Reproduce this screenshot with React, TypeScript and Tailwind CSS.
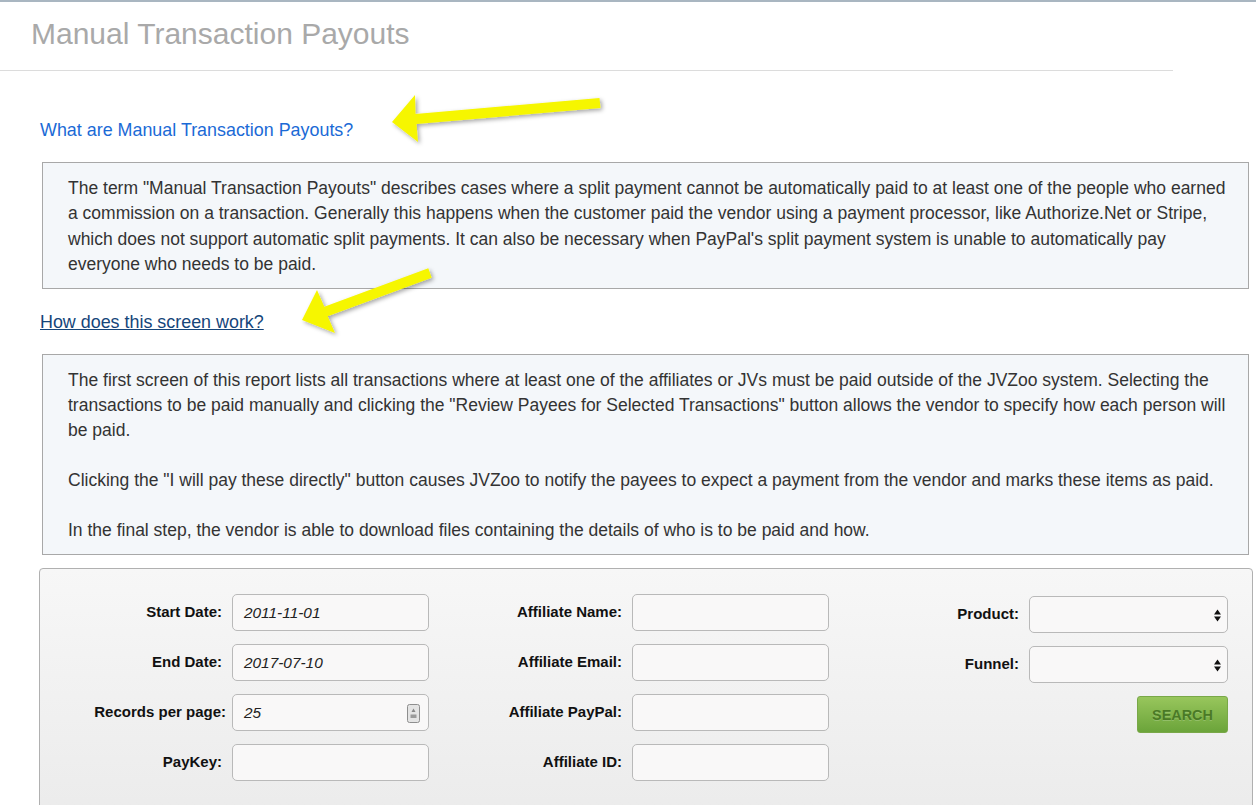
const font = { fontFamily: '"Liberation Sans", Arial, Helvetica, sans-serif' };

function Field({ label, value, spinner, wide }: { label: string; value?: string; spinner?: boolean; wide?: boolean }) {
  return (
    <div className="flex items-center h-[37px]">
      <label className={`flex-1 text-right text-[15px] font-bold text-[#111] whitespace-nowrap ${wide ? "pr-[6px]" : "pr-[10px]"}`}>{label}</label>
      <div className="relative w-[197px] h-[37px] rounded-[5px] border border-[#b9b9b9] bg-[#f9f8f8] flex items-center px-[11px]">
        <span className="text-[15.4px] italic text-[#222]">{value}</span>
        {spinner && (
          <svg className="absolute right-[8px] top-[9px]" width="13" height="19" viewBox="0 0 13 19">
            <rect x="0.5" y="0.5" width="12" height="18" rx="2" fill="#e4e4e4" stroke="#8e8e8e" />
            <path d="M6.5 4.5 L8.5 8 H4.5 Z" fill="#888" />
            <rect x="3.5" y="10.5" width="6" height="3.5" fill="#9a9a9a" />
          </svg>
        )}
      </div>
    </div>
  );
}

function Select({ label }: { label: string }) {
  return (
    <div className="flex items-center h-[37px]">
      <label className="flex-1 text-right text-[15px] font-bold text-[#111] pr-[10px]">{label}</label>
      <div className="relative w-[199px] h-[37px] rounded-[5px] border border-[#b9b9b9] bg-[#f9f8f8]">
        <svg className="absolute right-[5px] top-[11px]" width="9" height="15" viewBox="0 0 9 15">
          <path d="M4.5 1.5 L8 6.5 H1 Z M4.5 13.5 L8 8.5 H1 Z" fill="#111" />
        </svg>
      </div>
    </div>
  );
}

export default function App() {
  return (
    <div className="relative w-[1256px] h-[805px] overflow-hidden bg-white" style={font}>
      <div className="h-[2px] bg-[#a9b6c1]" />
      <div className="w-[1173px] h-[69px] border-b border-[#dcdcdc] pl-[31px] pt-[14px]">
        <h1 className="text-[30px] leading-[36px] text-[#a9a9a9]">Manual Transaction Payouts</h1>
      </div>

      <div className="pl-[40px] pr-[7px]">
        <a className="block mt-[48px] text-[17.9px] leading-[22px] text-[#1b6ad6]">What are Manual Transaction Payouts?</a>

        <div className="ml-[2px] mt-[21px] border border-[#a8a8a8] bg-[#f4f7fa] pl-[25px] pr-[12px] pt-[13px] pb-[11px] text-[17.5px] leading-[25.3px] text-[#333]">
          The term "Manual Transaction Payouts" describes cases where a split payment cannot be automatically paid to at least one of the people who earned a commission on a transaction. Generally this happens when the customer paid the vendor using a payment processor, like Authorize.Net or Stripe, which does not support automatic split payments. It can also be necessary when PayPal's split payment system is unable to automatically pay everyone who needs to be paid.
        </div>

        <a className="block mt-[22px] text-[17.9px] leading-[22px] text-[#15457a] underline">How does this screen work?</a>

        <div className="ml-[2px] mt-[21px] border border-[#a8a8a8] bg-[#f4f7fa] pl-[25px] pr-[12px] pt-[13px] pb-[11px] text-[17.5px] leading-[25px] text-[#333]">
          <p>
            The first screen of this report lists all transactions where at least one of the affiliates or JVs must be paid outside of the JVZoo system. Selecting the transactions to be paid manually and clicking the "Review Payees for Selected Transactions" button allows the vendor to specify how each person will be paid.
          </p>
          <p className="mt-[25px]">
            Clicking the "I will pay these directly" button causes JVZoo to notify the payees to expect a payment from the vendor and marks these items as paid.
          </p>
          <p className="mt-[25px]">
            In the final step, the vendor is able to download files containing the details of who is to be paid and how.
          </p>
        </div>
      </div>

      <div className="ml-[39px] mr-[3px] mt-[13px] h-[300px] rounded-t-[4px] border border-[#b0b0b0] bg-gradient-to-b from-[#f7f7f7] to-[#e9e9e9] pt-[25px] flex">
        <div className="w-[389px] flex flex-col gap-[13px]">
          <Field label="Start Date:" value="2011-11-01" />
          <Field label="End Date:" value="2017-07-10" />
          <Field label="Records per page:" value="25" spinner wide />
          <Field label="PayKey:" />
        </div>
        <div className="w-[400px] flex flex-col gap-[13px]">
          <Field label="Affiliate Name:" />
          <Field label="Affiliate Email:" />
          <Field label="Affiliate PayPal:" />
          <Field label="Affiliate ID:" />
        </div>
        <div className="w-[399px] flex flex-col gap-[13px] pt-[2px]">
          <Select label="Product:" />
          <Select label="Funnel:" />
          <div className="flex justify-end">
            <button className="w-[91px] h-[37px] pt-[3px] rounded-[3px] border border-[#79a848] bg-gradient-to-b from-[#98c65c] to-[#6ba43a] text-[14.4px] font-bold text-[#4a7a26] [text-shadow:0_1px_0_rgba(255,255,255,0.2)]">
              SEARCH
            </button>
          </div>
        </div>
      </div>

      <svg className="absolute inset-0 pointer-events-none" width="1256" height="805">
        <defs>
          <filter id="sh" x="-20%" y="-50%" width="140%" height="200%">
            <feDropShadow dx="2" dy="2" stdDeviation="2" floodColor="#000" floodOpacity="0.35" />
          </filter>
        </defs>
        <g filter="url(#sh)" fill="#f6f600">
          <polygon points="599.5,98 415.5,114 415,95 392,122 418,142 416.5,124 600.5,108" />
          <polygon points="428.3,268.3 324.3,306.8 317,290 302,320 335,333 327.7,316.2 431.7,277.7" />
        </g>
      </svg>
    </div>
  );
}
